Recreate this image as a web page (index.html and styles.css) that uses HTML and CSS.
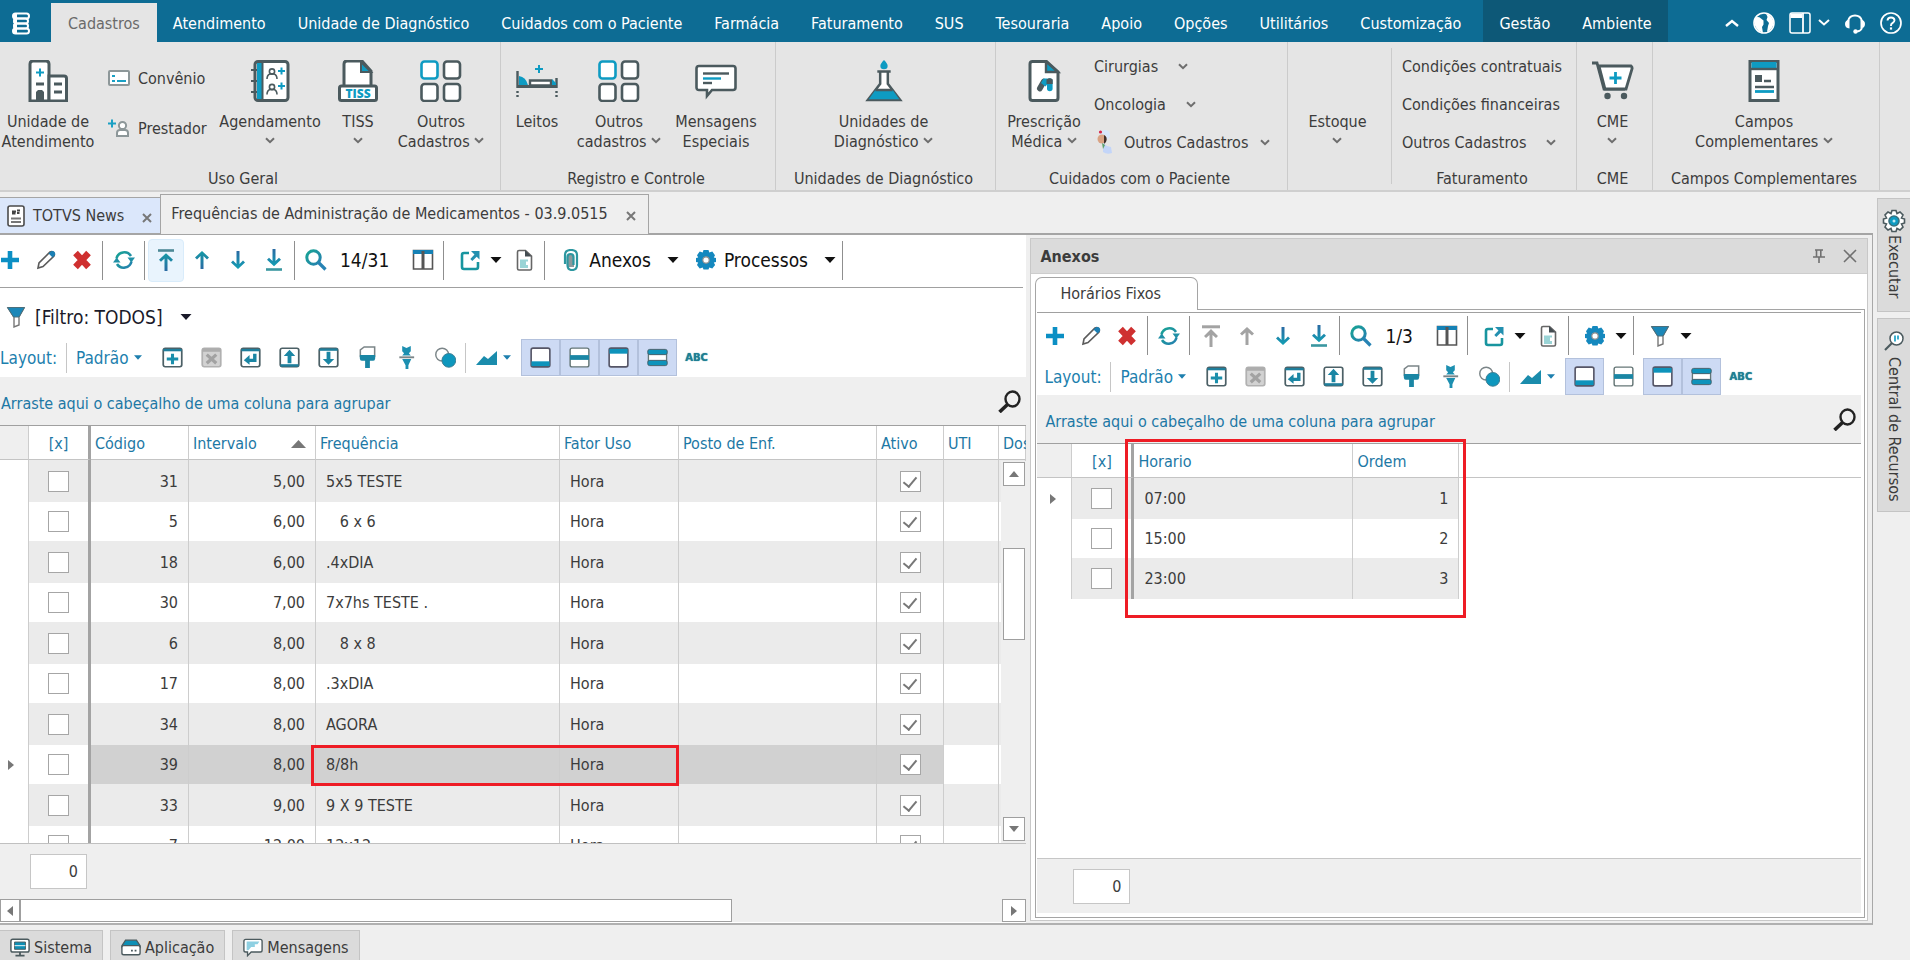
FILE: index.html
```html
<!DOCTYPE html>
<html lang="pt-BR">
<head>
  <meta charset="UTF-8">
  <meta name="viewport" content="width=device-width, initial-scale=1.0">
  <title>Frequências de Administração de Medicamentos</title>
  <link rel="stylesheet" href="styles.css">
</head>
<body>

  <!-- icon set -->
  <svg class="defs" width="0" height="0" aria-hidden="true">
    <defs>
      <linearGradient id="gUp" x1="0" y1="0" x2="0" y2="1"><stop offset="0" stop-color="#159aa6"/><stop offset="1" stop-color="#2a6aa3"/></linearGradient>
      <linearGradient id="gDown" x1="0" y1="0" x2="0" y2="1"><stop offset="0" stop-color="#2a6aa3"/><stop offset="1" stop-color="#12a0b4"/></linearGradient>
      <linearGradient id="gRound" x1="0" y1="0" x2="1" y2="1"><stop offset="0" stop-color="#18a394"/><stop offset="1" stop-color="#2580b0"/></linearGradient>
    </defs>
    <symbol id="i-chev" viewBox="0 0 10 7"><path d="M1 1.200l4 4 4-4" fill="none" stroke="#6e6e6e" stroke-width="2"/></symbol>
    <symbol id="i-caret" viewBox="0 0 11 6"><path d="M0 0h11l-5.500 6z" fill="currentColor"/></symbol>

    <symbol id="i-building" viewBox="0 0 42 42"><path d="M3 41V4q0-3 3-3h13q3 0 3 3v37z" fill="#fff" stroke="#4b5a5e" stroke-width="3"/><path d="M22 16h15q2.500 0 2.500 2.500V41H22z" fill="#fff" stroke="#4b5a5e" stroke-width="3"/><path d="M9 12.500h8M13 8.500v8" stroke="#0e9bc2" stroke-width="2"/><path d="M9 24h8M27 24h8M27 32h8" stroke="#4b5a5e" stroke-width="3"/><path d="M9 42V32l2-2h4l2 2v10z" fill="#4b5a5e"/></symbol>
    <symbol id="i-card" viewBox="0 0 22 16"><rect x="1" y="1" width="20" height="14" rx="1" fill="#fff" stroke="#8d9799" stroke-width="2"/><path d="M4 6h3M4 11h3M9 11h9" stroke="#1aa0c4" stroke-width="2"/></symbol>
    <symbol id="i-person" viewBox="0 0 22 18"><path d="M0 4.500h8M4 .5v8" stroke="#1aa0c4" stroke-width="2"/><circle cx="14.500" cy="6.500" r="3.600" fill="#fff" stroke="#8d9799" stroke-width="2"/><path d="M9 17v-3q0-3 3-3h5q3 0 3 3v3z" fill="#fff" stroke="#8d9799" stroke-width="2"/></symbol>
    <symbol id="i-book" viewBox="0 0 42 42"><rect x="6" y="1.500" width="33" height="39" rx="3" fill="#fff" stroke="#4b5a5e" stroke-width="3"/><path d="M8 3h5v36H8z" fill="#0e9bc2"/><path d="M13.500 2v38" stroke="#4b5a5e" stroke-width="2"/><path d="M2 10h6M2 21h6M2 32h6" stroke="#4b5a5e" stroke-width="2"/><g fill="none" stroke="#4b5a5e" stroke-width="1.600"><circle cx="23" cy="11.500" r="2.600"/><path d="M18 19q0-4 3-5h4q3 1 3 5"/><circle cx="23" cy="27" r="2.600"/><path d="M18 34.500q0-4 3-5h4q3 1 3 5"/></g><path d="M29 11h7M32.500 7.500v7M29 26h7M32.500 22.500v7" stroke="#0e9bc2" stroke-width="2"/></symbol>
    <symbol id="i-tiss" viewBox="0 0 42 42"><path d="M7 27V4q0-3 3-3h15l9 10v16z" fill="#fff" stroke="#4b5a5e" stroke-width="3"/><path d="M24 2v10h10z" fill="#0e9bc2" stroke="#4b5a5e" stroke-width="2"/><rect x="2.500" y="26" width="37" height="14.500" rx="2" fill="#fff" stroke="#4b5a5e" stroke-width="3"/><text x="21" y="37.500" text-anchor="middle" font-family="Open Sans, sans-serif" font-weight="800" font-size="12" fill="#0e9bc2">TISS</text></symbol>
    <symbol id="i-grid" viewBox="0 0 42 42"><g fill="#fff" stroke="#4b5a5e" stroke-width="2.600"><rect x="24" y="1.500" width="16" height="17" rx="3"/><rect x="1.500" y="24" width="16" height="17" rx="3"/><rect x="24" y="24" width="16" height="17" rx="3"/><rect x="1.500" y="1.500" width="16" height="17" rx="3" stroke="#0e9bc2"/></g></symbol>
    <symbol id="i-bed" viewBox="0 0 42 42"><path d="M19 9h8M23 5v8" stroke="#0e9bc2" stroke-width="2"/><path d="M1.500 11v17M1.500 31v2M1.500 35v2M40.500 18v10M40.500 31v2M40.500 35v2" stroke="#4b5a5e" stroke-width="2.400"/><path d="M3 16q7 1 9 9H3z" fill="#0e9bc2"/><path d="M14 25.500v-5h21v5z" fill="#fff" stroke="#4b5a5e" stroke-width="2.400"/><path d="M36 19l4 4v3h-4z" fill="#0e9bc2"/><path d="M1 26.500h40" stroke="#4b5a5e" stroke-width="3"/></symbol>
    <symbol id="i-msg" viewBox="0 0 42 42"><path d="M4 6h34q2.500 0 2.500 2.500v19q0 2.500-2.500 2.500H17l-5 6v-6H4q-2.500 0-2.500-2.500v-19Q1.500 6 4 6z" fill="#fff" stroke="#4b5a5e" stroke-width="2.600"/><path d="M8 13.500h26" stroke="#4b5a5e" stroke-width="2.400"/><path d="M8 18.500h18" stroke="#0e9bc2" stroke-width="2.400"/><path d="M8 23h9" stroke="#4b5a5e" stroke-width="2.400"/></symbol>
    <symbol id="i-flask" viewBox="0 0 42 44"><path d="M21 0q4 4 3.800 6.200a3.800 3.400 0 0 1-7.600 0Q17 4 21 0z" fill="#0e9bc2"/><path d="M17 12v13L4 42h34L25 25V12" fill="#fff" stroke="#4b5a5e" stroke-width="2.600"/><path d="M12 31.500h18l7 9.500H5z" fill="#0e9bc2"/><path d="M14 12h14M12 31.500h18" stroke="#4b5a5e" stroke-width="2.600"/></symbol>
    <symbol id="i-rx" viewBox="0 0 42 42"><path d="M7 4q0-2.500 2.500-2.500h14L35 12v26q0 2.500-2.500 2.500h-23Q7 40.500 7 38z" fill="#fff" stroke="#4b5a5e" stroke-width="3"/><path d="M23 1.500V12h12z" fill="#0e9bc2" stroke="#4b5a5e" stroke-width="2.400"/><path d="M16.800 28.500l4-7" stroke="#4b5a5e" stroke-width="5.600" stroke-linecap="round"/><path d="M18 23l2.500-4.500h4l.5 5-2.500 3z" fill="#0e9bc2"/><path d="M26.800 21v7.500" stroke="#0e9bc2" stroke-width="5.600" stroke-linecap="round"/><path d="M23.500 19.500q3-2.500 6.200 0V24h-6.200z" fill="#4b5a5e"/></symbol>
    <symbol id="i-nurse" viewBox="0 0 18 24"><circle cx="9" cy="5" r="5" fill="#d9e6fb"/><circle cx="6" cy="9" r="4.500" fill="#d9a384"/><path d="M8 5q4 2 2 7l-2 2z" fill="#40302c"/><circle cx="4.500" cy="2" r="1.600" fill="#d8274b"/><path d="M7 13l4 3 4 1 1 6q-5 2-9-1z" fill="#c3d5f8"/><path d="M6 13l1 6 2-4z" fill="#5ba06a"/></symbol>
    <symbol id="i-cart" viewBox="0 0 42 42"><path d="M0 3h5l7 26h21" fill="none" stroke="#4b5a5e" stroke-width="2.800"/><path d="M7 6h32q1.500 1 1 3l-6 20H13z" fill="#fff" stroke="#4b5a5e" stroke-width="2.800"/><path d="M17.500 18h12M23.500 12v12" stroke="#0e9bc2" stroke-width="2.800"/><circle cx="15.500" cy="36" r="3.200" fill="#4b5a5e"/><circle cx="32" cy="36" r="3.200" fill="#4b5a5e"/></symbol>
    <symbol id="i-form" viewBox="0 0 42 42"><path d="M7 1.500h28v39H7z" fill="#fff" stroke="#4b5a5e" stroke-width="3"/><path d="M8.500 2h25v6h-25z" fill="#0e9bc2"/><path d="M7 9h28" stroke="#4b5a5e" stroke-width="2.400"/><path d="M12 15h7v7h-7z" fill="#4b5a5e"/><path d="M21 21h7M12 27h19" stroke="#4b5a5e" stroke-width="2.400"/><path d="M12 31.500h19" stroke="#0e9bc2" stroke-width="2.800"/></symbol>

    <symbol id="i-plus" viewBox="0 0 22 22"><path d="M2 11h18M11 2v18" stroke="#0b8fc4" stroke-width="4.600"/></symbol>
    <symbol id="i-pencil" viewBox="0 0 22 22"><path d="M3 19l1-5L15 3q2-1 3.500.3T19 7L8 17.500z" fill="#fff" stroke="#5b5b5b" stroke-width="1.600"/><path d="M13.500 4.500L16 2.200q2-.7 3.300.6t.7 3.200L17.600 8.400z" fill="#1b7fb4"/></symbol>
    <symbol id="i-del" viewBox="0 0 22 22"><path d="M4.500 4l13 14M17.500 4l-13 14" stroke="#cf3030" stroke-width="6.400"/></symbol>
    <symbol id="i-refresh" viewBox="0 0 22 22"><path d="M3.500 9.500A8 8 0 0 1 18 7M18.500 12.500A8 8 0 0 1 4 15" fill="none" stroke="url(#gRound)" stroke-width="2.600"/><path d="M14.500 8.500h7.500l-3.700 5zM7.500 13.500H0l3.700-5z" fill="#2090a6"/></symbol>
    <symbol id="i-top" viewBox="0 0 22 22"><path d="M3 1.500h16" stroke="#4d8996" stroke-width="2.600"/><path d="M9.500 22V9.500L6 12.700 4 10.700l7-6.500 7 6.500-2 2-3.500-3.200V22z" fill="url(#gUp)"/></symbol>
    <symbol id="i-top-off" viewBox="0 0 22 22"><path d="M2 1.800h18" stroke="#a3a3a3" stroke-width="3"/><path d="M9.500 22V10L6 13l-2-2 7-7 7 7-2 2-3.500-3v12z" fill="#a3a3a3"/></symbol>
    <symbol id="i-up" viewBox="0 0 22 22"><path d="M9.500 20V7L6 10.500l-2-2L11 2l7 6.500-2 2L12.500 7v13z" fill="url(#gUp)"/></symbol>
    <symbol id="i-up-off" viewBox="0 0 22 22"><path d="M9.500 20V7.500L6 10.500l-2-2L11 2l7 6.500-2 2-3.500-3V20z" fill="#a3a3a3"/></symbol>
    <symbol id="i-down" viewBox="0 0 22 22"><path d="M9.500 2v13L6 11.500l-2 2 7 6.500 7-6.500-2-2-3.500 3.500V2z" fill="url(#gDown)"/></symbol>
    <symbol id="i-bottom" viewBox="0 0 22 22"><path d="M3 20.500h16" stroke="#3a97a0" stroke-width="2.600"/><path d="M9.500 0v12L6 8.800l-2 2 7 6.500 7-6.500-2-2-3.500 3.200V0z" fill="url(#gDown)"/></symbol>
    <symbol id="i-search" viewBox="0 0 22 22"><circle cx="8.500" cy="8.500" r="6.700" fill="none" stroke="url(#gRound)" stroke-width="3"/><path d="M13.500 13.500l7 7" stroke="#2783b4" stroke-width="3.200"/></symbol>
    <symbol id="i-cols" viewBox="0 0 22 22"><path d="M1.500 1.500h19v18.500h-19z" fill="#fff" stroke="#555" stroke-width="1.600"/><path d="M1 1h20v4H1z" fill="#1581b5"/><path d="M11 2v18" stroke="#555" stroke-width="3"/></symbol>
    <symbol id="i-export" viewBox="0 0 22 22"><path d="M10 4H5Q3 4 3 6v12q0 2 2 2h12q2 0 2-2v-5" fill="none" stroke="#18959f" stroke-width="2.600"/><path d="M12 2h8.500v8.500l-2.800-2.800-4.400 4.300-2-2L15.500 5.500z" fill="#2390b0"/></symbol>
    <symbol id="i-doc" viewBox="0 0 22 22"><path d="M4.500 3q0-1.500 1.500-1.500h6.500L18.500 7v12.500q0 1.500-1.500 1.500H6q-1.500 0-1.500-1.500z" fill="#fff" stroke="#666" stroke-width="1.600"/><path d="M12 1v6.500h6.500z" fill="#444d52"/><path d="M7 10.500h8v2h-2v3.500h2v3H7z" fill="#9ad4d6"/></symbol>
    <symbol id="i-clip" viewBox="0 0 22 22"><path d="M8 6h6v12H8z" fill="#8b999c"/><path d="M5 15V6q0-5 6-5t6 5v10q0 5-5 5-4.500 0-4.500-5V8q0-3 3-3t3 3v8" fill="none" stroke="#2c97a0" stroke-width="2.200"/></symbol>
    <symbol id="i-gear" viewBox="0 0 22 22"><path d="M8.500 1h5l.8 2.600 3-1 2.700 3.600-1.200 2.300 2.200.5v4l-2.200.6 1.300 2.300-2.800 3.600-3-1-.8 2h-5l-.8-2-3 1L2 15.900l1.200-2.300L1 13V9l2.200-.5L2 6.200l2.700-3.600 3 1z" fill="#1488be"/><circle cx="11" cy="11" r="3.200" fill="#fff" stroke="#8d8d8d" stroke-width="1.200"/></symbol>
    <symbol id="i-funnel" viewBox="0 0 22 22"><path d="M3 2h16l-5 9v8l-5 2V11z" fill="#fff" stroke="#777" stroke-width="1.400"/><path d="M2.500 1.500h17L14 11H8.500z" fill="#1b87b8" stroke="#4b6f7c" stroke-width="1"/></symbol>

    <symbol id="l-add" viewBox="0 0 22 22"><rect x="1.300" y="1.300" width="19.400" height="19.400" rx="2" fill="#fff" stroke="#4c6066" stroke-width="1.800"/><path d="M1.500 2h19v2.500h-19z" fill="#1f7f9c"/><path d="M5 12.500h12M11 7v11" stroke="#1a8fac" stroke-width="3.200"/></symbol>
    <symbol id="l-rem" viewBox="0 0 22 22"><rect x="1.300" y="1.300" width="19.400" height="19.400" rx="2" fill="#d2d2d2" stroke="#b1b1b1" stroke-width="1.800"/><path d="M1.500 1.500h19V5h-19z" fill="#adadad"/><path d="M6 8l10 9M16 8L6 17" stroke="#a2a2a2" stroke-width="3.400"/></symbol>
    <symbol id="l-back" viewBox="0 0 22 22"><rect x="1.300" y="1.300" width="19.400" height="19.400" rx="2" fill="#fff" stroke="#4c6066" stroke-width="1.800"/><path d="M1.500 2h19v2.500h-19z" fill="#1f7f9c"/><path d="M15.500 7v7H8" fill="none" stroke="#1a86a4" stroke-width="3.600"/><path d="M10 8.500v10L4 13.800z" fill="#1a86a4"/></symbol>
    <symbol id="l-up" viewBox="0 0 22 22"><rect x="1.300" y="1.300" width="19.400" height="19.400" rx="2" fill="#fff" stroke="#4c6066" stroke-width="1.800"/><path d="M1.500 18h19v2.600h-19z" fill="#1f7f9c"/><path d="M11 3l6 6.500h-4V17H9V9.500H5z" fill="#1a86a4"/></symbol>
    <symbol id="l-down" viewBox="0 0 22 22"><rect x="1.300" y="1.300" width="19.400" height="19.400" rx="2" fill="#fff" stroke="#4c6066" stroke-width="1.800"/><path d="M1.500 1.500h19V4h-19z" fill="#1f7f9c"/><path d="M11 18.500l-6-6h4V5h4v7.500h4z" fill="#1a86a4"/></symbol>
    <symbol id="l-brush" viewBox="0 0 22 24"><path d="M3.500 11V4l4-3h11v10z" fill="#fff" stroke="#7b8588" stroke-width="1.600"/><path d="M3 9.500h16V13q0 2.500-2 2.500H5q-2 0-2-2.500z" fill="#1a86a4"/><path d="M8.500 14h5v9h-5z" fill="#1a86a4"/></symbol>
    <symbol id="l-pen" viewBox="0 0 22 24"><path d="M6.500 0l4.500 2 4.500-2v5.500l-2 2 2 2.500h-9l2-2.500-2-2z" fill="#1c8fb0"/><path d="M3.500 11.800h15.500" stroke="#7b8588" stroke-width="2"/><path d="M6.500 13.500h9.500L13 20v4h-3v-4z" fill="#1c8fb0"/></symbol>
    <symbol id="l-circles" viewBox="0 0 22 22"><circle cx="7.500" cy="8" r="6.700" fill="#fff" stroke="#7b8588" stroke-width="1.500"/><circle cx="14.500" cy="14" r="7.200" fill="#0e97bd" stroke="#3d7d92" stroke-width="1"/></symbol>
    <symbol id="l-chart" viewBox="0 0 22 16"><path d="M0 15L8 6l4 3 9-8v14z" fill="#1a8cac"/></symbol>
    <symbol id="l-foot" viewBox="0 0 22 22"><rect x="1.200" y="1.200" width="19.600" height="19.600" rx="2" fill="#fff" stroke="#556" stroke-width="1.700"/><path d="M1.500 15h19v5h-19z" fill="#0e93bb"/></symbol>
    <symbol id="l-mid" viewBox="0 0 22 22"><rect x="1.200" y="1.200" width="19.600" height="19.600" rx="2" fill="#fff" stroke="#677" stroke-width="1.500"/><path d="M1 8.500h20v5H1z" fill="#1a86a4"/></symbol>
    <symbol id="l-head" viewBox="0 0 22 22"><rect x="1.200" y="1.200" width="19.600" height="19.600" rx="2" fill="#fff" stroke="#556" stroke-width="1.700"/><path d="M1.500 2h19v5h-19z" fill="#0e93bb"/></symbol>
    <symbol id="l-rows" viewBox="0 0 22 22"><rect x="1.500" y="7" width="19" height="8" fill="#fff" stroke="#677" stroke-width="1.400"/><rect x=".8" y="2.500" width="20.400" height="5.500" rx="2" fill="#0e93bb" stroke="#46606a" stroke-width="1"/><rect x=".8" y="14" width="20.400" height="5.500" rx="2" fill="#0e93bb" stroke="#46606a" stroke-width="1"/></symbol>
    <symbol id="i-find" viewBox="0 0 23 23"><ellipse cx="14.500" cy="9" rx="7" ry="7.500" fill="none" stroke="#222" stroke-width="2.400"/><path d="M9.500 14.500L1.500 22" stroke="#222" stroke-width="3.600"/></symbol>
  </svg>

  <header class="menubar">
    <a class="logo" href="#" aria-label="Início">
      <svg width="20" height="23" viewBox="0 0 20 23"><g fill="none" stroke="#fff" stroke-width="2"><rect x="2" y="1.500" width="16" height="5" rx="2.500"/><rect x="3" y="6.500" width="14" height="5" rx="2.500"/><rect x="3" y="11.500" width="14" height="5" rx="2.500"/><rect x="2" y="16.500" width="16" height="5" rx="2.500"/></g><path d="M2 2h4v4H2zM2.500 7H6v4H2.500zM2.500 12H6v4H2.500zM2 17h4v4H2z" fill="#fff"/></svg>
    </a>
    <nav class="menu">
      <a class="active" href="#">Cadastros</a>
      <a href="#">Atendimento</a>
      <a href="#">Unidade de Diagnóstico</a>
      <a href="#">Cuidados com o Paciente</a>
      <a href="#">Farmácia</a>
      <a href="#">Faturamento</a>
      <a href="#">SUS</a>
      <a href="#">Tesouraria</a>
      <a href="#">Apoio</a>
      <a href="#">Opções</a>
      <a href="#">Utilitários</a>
      <a href="#">Customização</a>
      <div class="dark">
        <a href="#">Gestão</a>
        <a href="#">Ambiente</a>
      </div>
    </nav>
    <div class="menu-tools">
      <button aria-label="Recolher"><svg width="14" height="8" viewBox="0 0 14 8"><path d="M1 7l6-5 6 5" fill="none" stroke="#fff" stroke-width="2.400"/></svg></button>
      <button aria-label="Idioma"><svg width="22" height="22" viewBox="0 0 22 22"><circle cx="11" cy="11" r="10" fill="none" stroke="#fff" stroke-width="1.600"/><path d="M2 6Q5 4 8 6.500l2.500 2v4L9 15l1 6Q2 18 1.500 11zM13 1.500q7 2.500 7.500 9.500-.5 6-6.500 9l1-6 1-3-2.500-3 1-3z" fill="#fff"/></svg></button>
      <button aria-label="Painéis"><svg width="22" height="22" viewBox="0 0 22 22"><rect x="1" y="1" width="20" height="20" rx="2" fill="none" stroke="#fff" stroke-width="1.500"/><path d="M1.500 1.500H13V6H1.500z" fill="#fff"/><path d="M14 1v20" stroke="#fff" stroke-width="1.800"/></svg><svg width="12" height="7" viewBox="0 0 12 7"><path d="M1 1l5 4.500L11 1" fill="none" stroke="#fff" stroke-width="2"/></svg></button>
      <button aria-label="Suporte"><svg width="22" height="22" viewBox="0 0 22 22"><path d="M4 9a7.200 7.200 0 0 1 14 0" fill="none" stroke="#fff" stroke-width="1.800"/><path d="M5.500 7.500v9Q1 16 1 12t4.500-4.500zM16.500 7.500v9q4.500-.5 4.500-4.500t-4.500-4.500z" fill="#fff"/><path d="M18 16q-1 3-5 3.500" fill="none" stroke="#fff" stroke-width="1.800"/><circle cx="11.500" cy="19.500" r="2.200" fill="#fff"/></svg></button>
      <button aria-label="Ajuda"><svg width="22" height="22" viewBox="0 0 22 22"><circle cx="11" cy="11" r="10" fill="none" stroke="#fff" stroke-width="1.700"/><path d="M7.500 8.500Q7.700 5.500 11 5.500t3.500 2.800q0 1.500-1.800 2.600T11 13.300v.7" fill="none" stroke="#fff" stroke-width="1.900"/><path d="M11 15.400v2.200" stroke="#fff" stroke-width="2.200"/></svg></button>
    </div>
  </header>

  <section class="ribbon">
    <div class="group geral">
      <div class="group-body">
        <button class="big w96"><svg class="ico42"><use href="#i-building"/></svg><span>Unidade de<br>Atendimento</span></button>
        <div class="stack two">
          <button class="small"><svg width="22" height="16"><use href="#i-card"/></svg>Convênio</button>
          <button class="small"><svg width="22" height="18"><use href="#i-person"/></svg>Prestador</button>
        </div>
        <button class="big w112"><svg class="ico42"><use href="#i-book"/></svg><span>Agendamento<br><svg class="chev"><use href="#i-chev"/></svg></span></button>
        <button class="big w64"><svg class="ico42"><use href="#i-tiss"/></svg><span>TISS<br><svg class="chev"><use href="#i-chev"/></svg></span></button>
        <button class="big w102"><svg class="ico42"><use href="#i-grid"/></svg><span>Outros<br>Cadastros <svg class="chev"><use href="#i-chev"/></svg></span></button>
      </div>
      <div class="group-name">Uso Geral</div>
    </div>
    <div class="group">
      <div class="group-body pad8">
        <button class="big w56"><svg class="ico42"><use href="#i-bed"/></svg><span>Leitos</span></button>
        <button class="big w108"><svg class="ico42"><use href="#i-grid"/></svg><span>Outros<br>cadastros <svg class="chev"><use href="#i-chev"/></svg></span></button>
        <button class="big w86"><svg class="ico42"><use href="#i-msg"/></svg><span>Mensagens<br>Especiais</span></button>
      </div>
      <div class="group-name">Registro e Controle</div>
    </div>
    <div class="group">
      <div class="group-body center">
        <button class="big"><svg class="ico42"><use href="#i-flask"/></svg><span>Unidades de<br>Diagnóstico <svg class="chev"><use href="#i-chev"/></svg></span></button>
      </div>
      <div class="group-name">Unidades de Diagnóstico</div>
    </div>
    <div class="group">
      <div class="group-body">
        <button class="big w96"><svg class="ico42"><use href="#i-rx"/></svg><span>Prescrição<br>Médica <svg class="chev"><use href="#i-chev"/></svg></span></button>
        <div class="stack">
          <button class="small">Cirurgias<svg class="chev far"><use href="#i-chev"/></svg></button>
          <button class="small">Oncologia<svg class="chev far"><use href="#i-chev"/></svg></button>
          <button class="small"><svg width="22" height="24"><use href="#i-nurse"/></svg>Outros Cadastros<svg class="chev near"><use href="#i-chev"/></svg></button>
        </div>
      </div>
      <div class="group-name">Cuidados com o Paciente</div>
    </div>
    <div class="group short">
      <div class="group-body center">
        <button class="big"><svg class="ico42"></svg><span>Estoque<br><svg class="chev"><use href="#i-chev"/></svg></span></button>
      </div>
    </div>
    <div class="group">
      <div class="group-body pad8">
        <div class="stack">
          <button class="small">Condições contratuais</button>
          <button class="small">Condições financeiras</button>
          <button class="small">Outros Cadastros<svg class="chev far"><use href="#i-chev"/></svg></button>
        </div>
      </div>
      <div class="group-name">Faturamento</div>
    </div>
    <div class="group">
      <div class="group-body center">
        <button class="big"><svg class="ico42"><use href="#i-cart"/></svg><span>CME<br><svg class="chev"><use href="#i-chev"/></svg></span></button>
      </div>
      <div class="group-name">CME</div>
    </div>
    <div class="group">
      <div class="group-body center">
        <button class="big"><svg class="ico42"><use href="#i-form"/></svg><span>Campos<br>Complementares <svg class="chev"><use href="#i-chev"/></svg></span></button>
      </div>
      <div class="group-name">Campos Complementares</div>
    </div>
  </section>

  <div class="workspace">
    <div class="document">
      <div class="doc-tabs">
        <div class="doc-tab news">
          <svg width="18" height="22" viewBox="0 0 18 22"><rect x="1" y="1" width="16" height="20" rx="2" fill="#fff" stroke="#4b4b4b" stroke-width="1.600"/><path d="M5 6.500h4M10 5.500h3M5 8.500h3.500M10 8h2.500" stroke="#444" stroke-width="2"/><path d="M4 13.500h10M4 17h10" stroke="#777" stroke-width="2"/></svg>
          <a href="#">TOTVS News</a>
          <button class="tab-close" aria-label="Fechar"><svg width="10" height="10" viewBox="0 0 10 10"><path d="M1 1l8 8M9 1L1 9" stroke="#777" stroke-width="2"/></svg></button>
        </div>
        <div class="doc-tab current">
          <a href="#">Frequências de Administração de Medicamentos - 03.9.0515</a>
          <button class="tab-close" aria-label="Fechar"><svg width="10" height="10" viewBox="0 0 10 10"><path d="M1 1l8 8M9 1L1 9" stroke="#777" stroke-width="2"/></svg></button>
        </div>
      </div>

      <div class="panes">
        <!-- frequências -->
        <section class="pane">
          <div class="toolbar main">
            <button class="tool" aria-label="Incluir"><svg><use href="#i-plus"/></svg></button>
            <button class="tool" aria-label="Editar"><svg><use href="#i-pencil"/></svg></button>
            <button class="tool" aria-label="Excluir"><svg><use href="#i-del"/></svg></button>
            <i class="sep"></i>
            <button class="tool" aria-label="Atualizar"><svg><use href="#i-refresh"/></svg></button>
            <i class="sep"></i>
            <button class="tool hover" aria-label="Primeiro"><svg><use href="#i-top"/></svg></button>
            <button class="tool" aria-label="Anterior"><svg><use href="#i-up"/></svg></button>
            <button class="tool" aria-label="Próximo"><svg><use href="#i-down"/></svg></button>
            <button class="tool" aria-label="Último"><svg><use href="#i-bottom"/></svg></button>
            <i class="sep"></i>
            <button class="tool" aria-label="Pesquisar"><svg><use href="#i-search"/></svg></button>
            <span class="counter">14/31</span>
            <button class="tool" aria-label="Colunas"><svg><use href="#i-cols"/></svg></button>
            <i class="sep"></i>
            <button class="drop" aria-label="Exportar"><svg><use href="#i-export"/></svg><svg class="caret gap"><use href="#i-caret"/></svg></button>
            <button class="tool" aria-label="Relatório"><svg><use href="#i-doc"/></svg></button>
            <i class="sep"></i>
            <button class="drop"><svg><use href="#i-clip"/></svg><span>Anexos</span><svg class="caret"><use href="#i-caret"/></svg></button>
            <button class="drop"><svg><use href="#i-gear"/></svg><span>Processos</span><svg class="caret"><use href="#i-caret"/></svg></button>
            <i class="sep"></i>
          </div>
          <div class="filter">
            <button class="filter-btn"><svg width="22" height="22"><use href="#i-funnel"/></svg><span>[Filtro: TODOS]</span><svg class="caret"><use href="#i-caret"/></svg></button>
          </div>
          <div class="layoutbar">
            <span class="layout-label">Layout:</span>
            <button class="layout-name">Padrão<svg class="caret"><use href="#i-caret"/></svg></button>
            <button class="lt" aria-label="Novo layout"><svg><use href="#l-add"/></svg></button>
            <button class="lt" aria-label="Excluir layout"><svg><use href="#l-rem"/></svg></button>
            <button class="lt" aria-label="Restaurar"><svg><use href="#l-back"/></svg></button>
            <button class="lt" aria-label="Exportar layout"><svg><use href="#l-up"/></svg></button>
            <button class="lt" aria-label="Importar layout"><svg><use href="#l-down"/></svg></button>
            <button class="lt" aria-label="Formatar"><svg><use href="#l-brush"/></svg></button>
            <button class="lt" aria-label="Ajustar"><svg><use href="#l-pen"/></svg></button>
            <button class="lt" aria-label="Condições"><svg><use href="#l-circles"/></svg></button>
            <button class="lt-chart" aria-label="Gráfico"><svg width="22" height="16"><use href="#l-chart"/></svg><svg class="caret"><use href="#i-caret"/></svg></button>
            <button class="lt on" aria-label="Rodapé"><svg><use href="#l-foot"/></svg></button>
            <button class="lt on" aria-label="Rodapé de grupo"><svg><use href="#l-mid"/></svg></button>
            <button class="lt on" aria-label="Agrupamento"><svg><use href="#l-head"/></svg></button>
            <button class="lt on" aria-label="Linhas"><svg><use href="#l-rows"/></svg></button>
            <button class="lt abc">ABC</button>
          </div>
          <div class="groupbar"><span>Arraste aqui o cabeçalho de uma coluna para agrupar</span><button aria-label="Localizar"><svg width="23" height="23"><use href="#i-find"/></svg></button></div>
          <div class="grid">
            <table class="freq">
              <colgroup><col class="c-ind"><col class="c-sel"><col class="c-cod"><col class="c-int"><col class="c-frq"><col class="c-fat"><col class="c-pos"><col class="c-ati"><col class="c-uti"><col></colgroup>
              <thead>
                <tr><th></th><th>[x]</th><th>Código</th><th><span class="sorted">Intervalo<svg width="15" height="8"><path d="M0 8L7.500 0 15 8z" fill="#777"/></svg></span></th><th>Frequência</th><th>Fator Uso</th><th>Posto de Enf.</th><th>Ativo</th><th>UTI</th><th>Dos</th></tr>
              </thead>
              <tbody id="freqRows"></tbody>
            </table>
            <div class="vscroll">
              <button aria-label="Rolar para cima"><svg width="10" height="6"><path d="M0 6L5 0l5 6z" fill="#777"/></svg></button>
              <div class="vtrack"><div class="vthumb"></div></div>
              <button aria-label="Rolar para baixo"><svg width="10" height="6"><path d="M0 0h10L5 6z" fill="#777"/></svg></button>
            </div>
          </div>
          <div class="totals"><input type="text" value="0" aria-label="Total de marcados" readonly></div>
          <div class="hscroll">
            <button aria-label="Rolar para a esquerda"><svg width="6" height="10"><path d="M6 0v10L0 5z" fill="#777"/></svg></button>
            <div class="htrack"><div class="hthumb"></div></div>
            <button aria-label="Rolar para a direita"><svg width="6" height="10"><path d="M0 0v10l6-5z" fill="#777"/></svg></button>
          </div>
        </section>

        <!-- anexos -->
        <section class="attach">
          <header class="attach-head">
            <h2>Anexos</h2>
            <button aria-label="Fixar"><svg width="12" height="14" viewBox="0 0 12 14"><path d="M2 1h8M3.500 1v6.500M7.800 1v6.500M0 8h12M6 8v6" fill="none" stroke="#707070" stroke-width="1.600"/></svg></button>
            <button aria-label="Fechar"><svg width="14" height="14" viewBox="0 0 14 14"><path d="M1 1l12 12M13 1L1 13" stroke="#707070" stroke-width="1.600"/></svg></button>
          </header>
          <div class="sub-tabs"><a href="#">Horários Fixos</a></div>
          <div class="attach-body">
            <div class="toolbar">
              <button class="tool" aria-label="Incluir"><svg><use href="#i-plus"/></svg></button>
              <button class="tool" aria-label="Editar"><svg><use href="#i-pencil"/></svg></button>
              <button class="tool" aria-label="Excluir"><svg><use href="#i-del"/></svg></button>
              <i class="sep"></i>
              <button class="tool" aria-label="Atualizar"><svg><use href="#i-refresh"/></svg></button>
              <i class="sep"></i>
              <button class="tool" aria-label="Primeiro"><svg><use href="#i-top-off"/></svg></button>
              <button class="tool" aria-label="Anterior"><svg><use href="#i-up-off"/></svg></button>
              <button class="tool" aria-label="Próximo"><svg><use href="#i-down"/></svg></button>
              <button class="tool" aria-label="Último"><svg><use href="#i-bottom"/></svg></button>
              <i class="sep"></i>
              <button class="tool" aria-label="Pesquisar"><svg><use href="#i-search"/></svg></button>
              <span class="counter">1/3</span>
              <button class="tool" aria-label="Colunas"><svg><use href="#i-cols"/></svg></button>
              <i class="sep"></i>
              <button class="drop" aria-label="Exportar"><svg><use href="#i-export"/></svg><svg class="caret gap"><use href="#i-caret"/></svg></button>
              <button class="tool" aria-label="Relatório"><svg><use href="#i-doc"/></svg></button>
              <i class="sep"></i>
              <button class="drop" aria-label="Processos"><svg><use href="#i-gear"/></svg><svg class="caret gap"><use href="#i-caret"/></svg></button>
              <i class="sep"></i>
              <button class="drop" aria-label="Filtro"><svg><use href="#i-funnel"/></svg><svg class="caret gap"><use href="#i-caret"/></svg></button>
            </div>
            <div class="layoutbar inset">
              <span class="layout-label">Layout:</span>
              <button class="layout-name">Padrão<svg class="caret"><use href="#i-caret"/></svg></button>
              <button class="lt" aria-label="Novo layout"><svg><use href="#l-add"/></svg></button>
              <button class="lt" aria-label="Excluir layout"><svg><use href="#l-rem"/></svg></button>
              <button class="lt" aria-label="Restaurar"><svg><use href="#l-back"/></svg></button>
              <button class="lt" aria-label="Exportar layout"><svg><use href="#l-up"/></svg></button>
              <button class="lt" aria-label="Importar layout"><svg><use href="#l-down"/></svg></button>
              <button class="lt" aria-label="Formatar"><svg><use href="#l-brush"/></svg></button>
              <button class="lt" aria-label="Ajustar"><svg><use href="#l-pen"/></svg></button>
              <button class="lt" aria-label="Condições"><svg><use href="#l-circles"/></svg></button>
              <button class="lt-chart" aria-label="Gráfico"><svg width="22" height="16"><use href="#l-chart"/></svg><svg class="caret"><use href="#i-caret"/></svg></button>
              <button class="lt on" aria-label="Rodapé"><svg><use href="#l-foot"/></svg></button>
              <button class="lt" aria-label="Rodapé de grupo"><svg><use href="#l-mid"/></svg></button>
              <button class="lt on" aria-label="Agrupamento"><svg><use href="#l-head"/></svg></button>
              <button class="lt on" aria-label="Linhas"><svg><use href="#l-rows"/></svg></button>
              <button class="lt abc">ABC</button>
            </div>
            <div class="groupbar inset"><span>Arraste aqui o cabeçalho de uma coluna para agrupar</span><button aria-label="Localizar"><svg width="23" height="23"><use href="#i-find"/></svg></button></div>
            <div class="grid">
              <table class="hours">
                <colgroup><col class="h-ind"><col class="h-sel"><col class="h-hor"><col class="h-ord"><col></colgroup>
                <thead>
                  <tr><th></th><th>[x]</th><th>Horario</th><th>Ordem</th><th></th></tr>
                </thead>
                <tbody id="hourRows"></tbody>
              </table>
              <div class="mark mark-hours"></div>
            </div>
            <div class="totals inset"><input type="text" value="0" aria-label="Total de marcados" readonly></div>
          </div>
        </section>
      </div>
    </div>

    <aside class="side-tabs">
      <button class="side-run"><svg width="24" height="24" viewBox="0 0 24 24"><path d="M10 1.500h4l1 3 3-1.500 3 3-1.500 3 3 1v4l-3 1 1.500 3-3 3-3-1.500-1 3h-4l-1-3-3 1.500-3-3 1.500-3-3-1v-4l3-1L3 6l3-3 3 1.500z" fill="#fff" stroke="#4b5a5e" stroke-width="1.600"/><circle cx="12" cy="12" r="5" fill="#0e9bc2" stroke="#37717f" stroke-width="1.600"/><circle cx="12" cy="12" r="1.500" fill="#bfe8f3"/></svg>Executar</button>
      <button class="side-res"><svg width="20" height="20" viewBox="0 0 20 20"><circle cx="12.500" cy="7.500" r="6.500" fill="#fff" stroke="#4b5a5e" stroke-width="1.500"/><path d="M11 4.500v6M14 4.500v4" stroke="#0e9bc2" stroke-width="1.600"/><path d="M8 12l-7 7" stroke="#4b5a5e" stroke-width="2.200"/></svg>Central de Recursos</button>
    </aside>
  </div>

  <footer class="bottom-tabs">
    <button><svg width="20" height="19" viewBox="0 0 22 20"><rect x="1" y="1" width="20" height="14" rx="2" fill="#fff" stroke="#4b5a5e" stroke-width="1.600"/><path d="M5 4h12v8H5z" fill="#0e8fb5" stroke="#4b5a5e"/><path d="M5 8h12" stroke="#fff"/><path d="M11 15v4M6 19h10" stroke="#4b5a5e" stroke-width="2"/></svg>Sistema</button>
    <button><svg width="20" height="17" viewBox="0 0 22 18"><path d="M5 1h12l4 6v2H1V7z" fill="#0e8fb5" stroke="#4b5a5e" stroke-width="1.400"/><rect x="1" y="7" width="20" height="10" rx="2" fill="#fff" stroke="#4b5a5e" stroke-width="1.500"/><path d="M11 12.500h2M15 12.500h2" stroke="#4b5a5e" stroke-width="2"/></svg>Aplicação</button>
    <button><svg width="20" height="19" viewBox="0 0 22 20"><path d="M3 1h16q2 0 2 2v10q0 2-2 2H9l-4 4v-4H3q-2 0-2-2V3q0-2 2-2z" fill="#fff" stroke="#4b5a5e" stroke-width="1.500"/><path d="M4 3.500h14l-2 3h-3v3H9L6 13H4z" fill="#8fd0e2"/></svg>Mensagens</button>
  </footer>

  <script>
    const freqs = [
      ['31', '5,00', '5x5 TESTE'],
      ['5', '6,00', '\u00a0\u00a0 6 x 6'],
      ['18', '6,00', '.4xDIA'],
      ['30', '7,00', '7x7hs TESTE .'],
      ['6', '8,00', '\u00a0\u00a0 8 x 8'],
      ['17', '8,00', '.3xDIA'],
      ['34', '8,00', 'AGORA'],
      ['39', '8,00', '8/8h'],
      ['33', '9,00', '9 X 9 TESTE'],
      ['7', '12,00', '12x12']
    ];
    const hours = [['07:00', 1], ['15:00', 2], ['23:00', 3]];
    const arrow = '<svg width="6" height="10"><path d="M0 0v10l6-5z" fill="#777"/></svg>';

    document.getElementById('freqRows').innerHTML = freqs.map(([code, interval, name]) => {
      const selected = code === '39';
      return `
        <tr class="${selected ? 'selected' : ''}">
          <td>${selected ? arrow : ''}</td>
          <td><input type="checkbox" aria-label="Marcar ${code}"></td>
          <td>${code}</td>
          <td>${interval}</td>
          <td>${name}${selected ? '<span class="mark mark-freq"></span>' : ''}</td>
          <td>Hora</td>
          <td></td>
          <td><input type="checkbox" aria-label="Ativo ${code}" checked></td>
          <td></td>
          <td></td>
        </tr>`;
    }).join('');

    document.getElementById('hourRows').innerHTML = hours.map(([time, order]) => `
        <tr>
          <td>${order === 1 ? arrow : ''}</td>
          <td><input type="checkbox" aria-label="Marcar ${time}"></td>
          <td>${time}</td>
          <td>${order}</td>
          <td></td>
        </tr>`).join('');
  </script>
</body>
</html>
```
FILE: styles.css
```css
* {
  box-sizing: border-box;
}

body {
  margin: 0;
  height: 100vh;
  overflow: hidden;
  display: flex;
  flex-direction: column;
  background: #efefef;
  color: #3c3c3c;
  font-family: "DejaVu Sans Condensed", "DejaVu Sans", sans-serif;
  font-size: 16px;
}

button {
  font: inherit;
  color: inherit;
  background: none;
  border: 0;
  padding: 0;
  cursor: pointer;
  white-space: nowrap;
}

a {
  color: inherit;
  text-decoration: none;
}

svg {
  display: block;
  flex: none;
}

.defs {
  position: absolute;
}

/* top menu */
.menubar {
  display: flex;
  height: 42px;
  background: #0d6c94;
  color: #fff;
}

.logo {
  width: 51px;
  padding: 12px 0 0 11px;
}

.menu {
  display: flex;
  align-items: flex-end;
}

.menu a {
  height: 39px;
  line-height: 41px;
  padding: 0 16px;
  white-space: nowrap;
}

.menu .active {
  padding: 0 17px;
  background: #e5e5e5;
  color: #6a6a6a;
}

.dark {
  display: flex;
  align-items: flex-end;
  height: 42px;
  margin-left: 6px;
  background: #0d5877;
}

.menu-tools {
  margin-left: auto;
  padding: 3px 8px 0 0;
  display: flex;
  align-items: center;
  gap: 14px;
}

.menu-tools button {
  display: flex;
  align-items: center;
  gap: 7px;
}

/* ribbon */
.ribbon {
  display: grid;
  grid-template-columns: 501px 275px 220px 292px 104px 185px 76px 227px 1fr;
  height: 150px;
  background: #e5e5e5;
  border-bottom: 2px solid #cfcfcf;
}

.group {
  display: flex;
  flex-direction: column;
  border-right: 1px solid #cbcbcb;
}

.group.short {
  margin: 6px 0;
}

.group.short .group-body {
  margin-top: -6px;
}

.group-body {
  display: flex;
  height: 127px;
}

.group-body.center {
  justify-content: center;
  padding-right: 4px;
}

.pad8 {
  padding-left: 8px;
}

.group-name {
  padding-right: 4px;
  line-height: 20px;
  text-align: center;
}

.geral .group-name {
  padding-right: 14px;
}

.big {
  display: flex;
  flex-direction: column;
  align-items: center;
  padding-top: 18px;
  line-height: 20px;
}

.big .chev {
  display: inline-block;
  vertical-align: 3px;
}

.ico42 {
  width: 42px;
  height: 42px;
  margin-bottom: 10px;
}

.w56 { width: 56px; }
.w64 { width: 64px; }
.w86 { width: 86px; }
.w96 { width: 96px; }
.w102 { width: 102px; }
.w108 { width: 108px; }
.w112 { width: 112px; }

.chev {
  width: 10px;
  height: 7px;
}

.stack {
  padding: 5px 0 0 2px;
}

.stack.two {
  width: 118px;
  padding: 11px 0 0 12px;
}

.small {
  display: flex;
  align-items: center;
  gap: 8px;
  height: 38px;
}

.two .small {
  height: 50px;
}

.far {
  margin-left: 12px;
}

.near {
  margin-left: 4px;
}

/* workspace */
.workspace {
  flex: 1;
  min-height: 0;
  display: flex;
  gap: 4px;
}

.document {
  flex: 1;
  min-width: 0;
  display: flex;
  flex-direction: column;
}

.doc-tabs {
  display: flex;
  align-items: flex-end;
  height: 43px;
  border-bottom: 2px solid #a5a5a5;
}

.doc-tab {
  display: flex;
  align-items: center;
  border: 1px solid #a5a5a5;
  border-bottom: 0;
}

.news {
  height: 36px;
  padding: 0 8px 0 7px;
  gap: 8px;
  background: #dbe7fb;
  border-left: 0;
  border-right: 0;
}

.news .tab-close {
  margin: 4px 0 0 10px;
}

.current {
  height: 40px;
  padding: 0 12px 2px 10px;
  margin-bottom: -1px;
  background: #efefef;
}

.current .tab-close {
  margin: 4px 0 0 18px;
}

.panes {
  flex: 1;
  min-height: 0;
  display: grid;
  grid-template-columns: 1027fr 838fr;
  gap: 4px;
  padding-right: 4px;
  border-right: 1px solid #a8a8a8;
  border-bottom: 2px solid #b0b0b0;
}

.pane {
  display: flex;
  flex-direction: column;
  min-width: 0;
  min-height: 0;
  background: #fff;
}

/* toolbars */
.toolbar {
  display: flex;
  align-items: center;
  height: 48px;
  color: #111;
  font-size: 19px;
}

.toolbar.main {
  height: 53px;
  padding-bottom: 2px;
  margin-right: 3px;
  border-bottom: 1px solid #a0a0a0;
}

.main .tool:first-child {
  margin-left: -8px;
}

.tool {
  width: 36px;
  height: 43px;
  display: flex;
  align-items: center;
  justify-content: center;
}

.tool svg,
.drop svg {
  width: 22px;
  height: 22px;
}

.tool.hover {
  background: #e9f4fd;
  border: 1px solid #d9ecfb;
  border-radius: 4px;
}

.sep {
  width: 2px;
  height: 39px;
  margin: 0 2px;
  border-left: 1px solid #8f8f8f;
}

.counter {
  padding: 0 16px 0 6px;
}

.drop {
  display: flex;
  align-items: center;
  padding: 0 4px 0 12px;
}

.drop span {
  margin: 0 16px 0 7px;
}

svg.caret {
  width: 12px;
  height: 6px;
}

.caret.gap {
  margin-left: 9px;
}

.filter {
  height: 51px;
  padding: 6px 0 0 5px;
  color: #1a1a2a;
  font-size: 19px;
}

.filter-btn {
  display: flex;
  align-items: center;
  height: 46px;
  gap: 8px;
}

.filter-btn .caret {
  margin-left: 9px;
}

.layoutbar {
  display: flex;
  align-items: center;
  height: 37px;
  color: #1d7fae;
  font-size: 17px;
}

.pane .layoutbar {
  margin-bottom: 1px;
}

.inset {
  padding-left: 7px;
}

.layout-label {
  width: 67px;
  line-height: 30px;
  border-right: 1px solid #c6c6c6;
}

.layout-name {
  width: 86px;
  padding-left: 9px;
  display: flex;
  align-items: center;
  gap: 5px;
}

.layout-name .caret,
.lt-chart .caret {
  width: 8px;
  height: 5px;
}

.lt {
  width: 39px;
  height: 37px;
  display: flex;
  align-items: center;
  justify-content: center;
}

.lt svg {
  width: 21px;
  height: 23px;
}

.lt.on {
  background: #cddaf4;
  border: 1px solid #b3c1dc;
}

.lt-chart {
  width: 56px;
  height: 30px;
  display: flex;
  align-items: center;
  gap: 5px;
  padding-left: 10px;
  border-left: 1px solid #c6c6c6;
}

.abc {
  font-family: "DejaVu Sans", sans-serif;
  font-weight: 700;
  font-size: 10px;
  color: #1f7f93;
  text-shadow: 0 0 1px #1f7f93;
}

.groupbar {
  display: flex;
  align-items: center;
  justify-content: space-between;
  height: 48px;
  padding-right: 5px;
  background: #efefef;
  color: #1d78a5;
  white-space: nowrap;
}

.groupbar span {
  padding: 4px 0 0 1px;
}

/* grids */
.grid {
  position: relative;
  flex: 1;
  min-height: 0;
  border-top: 1px solid #a0a0a0;
}

.pane .grid {
  overflow: hidden;
  border-bottom: 1px solid #c0c0c0;
}

table {
  width: 100%;
  table-layout: fixed;
  border-collapse: separate;
  border-spacing: 0;
}

.c-ind { width: 29px; }
.c-sel { width: 62px; }
.c-cod { width: 98px; }
.c-int { width: 127px; }
.c-frq { width: 244px; }
.c-fat { width: 119px; }
.c-pos { width: 198px; }
.c-ati { width: 67px; }
.c-uti { width: 55px; }
.h-ind { width: 35px; }
.h-sel { width: 62px; }
.h-hor { width: 219px; }
.h-ord { width: 106px; }

th {
  height: 34px;
  padding: 2px 0 0 4px;
  text-align: left;
  font-weight: 400;
  color: #1d78a5;
  white-space: nowrap;
  border-right: 1px solid #cdcdcd;
  border-bottom: 1px solid #c4c4c4;
}

th:first-child {
  background: #efefef;
}

th:nth-child(2) {
  padding-left: 0;
  text-align: center;
}

th:nth-child(2),
td:nth-child(2) {
  border-right: 3px solid #a3a3a3;
}

.sorted {
  display: flex;
  justify-content: space-between;
  align-items: center;
  padding-right: 9px;
}

td {
  height: 39px;
  padding: 0 10px;
  white-space: pre;
  border-right: 1px solid #cdcdcd;
}

tr:nth-child(odd) td {
  height: 42px;
  background: #ebebeb;
}

tbody tr td:first-child {
  background: #fff;
  padding: 0 0 0 8px;
}

td:nth-child(2),
.freq td:nth-child(8) {
  padding: 0;
}

.freq td:nth-child(3),
.freq td:nth-child(4),
.hours td:nth-child(4) {
  text-align: right;
}

.hours tr:nth-child(odd) td {
  height: 41px;
}

.hours td:first-child {
  padding-left: 13px;
}

.hours th:last-child,
.hours tr td:last-child {
  border-right: 0;
  background: #fff;
}

.selected td:nth-child(n+3):nth-child(-n+8) {
  background: #d1d1d1;
}

.freq td:nth-child(5) {
  position: relative;
}

input[type="checkbox"] {
  appearance: none;
  display: block;
  width: 21px;
  height: 21px;
  margin: 0 auto;
  border: 1px solid #a6a6a6;
  background: #fff;
}

input[type="checkbox"]:checked::before {
  content: "";
  display: block;
  width: 6px;
  height: 11px;
  margin: 2px auto 0;
  border: solid #777;
  border-width: 0 2px 2px 0;
  transform: rotate(40deg);
}

/* red callouts */
.mark {
  position: absolute;
  z-index: 1;
  border: 3px solid #ee1c25;
  pointer-events: none;
}

.mark-freq {
  top: 0;
  left: -5px;
  width: 368px;
  height: 41px;
}

.mark-hours {
  top: -5px;
  left: 88px;
  width: 341px;
  height: 179px;
}

/* scrollbars */
.vscroll {
  position: absolute;
  top: 35px;
  right: 0;
  bottom: 0;
  width: 25px;
  padding: 1px 1px 2px 2px;
  display: flex;
  flex-direction: column;
  background: #efefef;
}

.vscroll button,
.hscroll button {
  display: flex;
  align-items: center;
  justify-content: center;
  background: #fff;
  border: 1px solid #9f9f9f;
}

.vscroll button {
  height: 24px;
}

.vtrack {
  flex: 1;
  padding-top: 62px;
}

.vthumb {
  height: 92px;
  background: #fff;
  border: 1px solid #9f9f9f;
}

.totals {
  height: 55px;
  padding: 10px 0 0 30px;
  background: #efefef;
}

.totals.inset {
  padding-left: 36px;
  border-top: 1px solid #c6c6c6;
}

.totals input {
  width: 57px;
  height: 35px;
  padding: 0 8px 0 0;
  font: inherit;
  color: inherit;
  text-align: right;
  background: #fff;
  border: 1px solid #c6c6c6;
}

.hscroll {
  display: flex;
  height: 23px;
  margin-bottom: 1px;
  background: #efefef;
}

.hscroll button {
  width: 20px;
}

.hscroll button:last-child {
  width: 24px;
}

.htrack {
  flex: 1;
}

.hthumb {
  width: 72.5%;
  height: 100%;
  background: #fff;
  border: 1px solid #9f9f9f;
}

/* attachments panel */
.attach {
  display: flex;
  flex-direction: column;
  min-width: 0;
  margin: 3px 0 2px;
  background: #fff;
  border: 1px solid #c8c8c8;
}

.attach-head {
  display: flex;
  align-items: center;
  gap: 18px;
  height: 35px;
  padding: 0 10px 0 9px;
  background: #dbdbdb;
  border-bottom: 1px solid #cdcdcd;
}

.attach-head h2 {
  flex: 1;
  margin: 0;
  font-size: 16px;
}

.sub-tabs {
  display: flex;
  height: 36px;
  padding: 3px 2px 0 4px;
}

.sub-tabs a {
  width: 163px;
  line-height: 32px;
  padding-left: 24px;
  border: 1px solid #a5a5a5;
  border-bottom: 0;
  border-radius: 7px 7px 0 0;
}

.sub-tabs::after {
  content: "";
  flex: 1;
  border-bottom: 1px solid #a5a5a5;
}

.attach-body {
  flex: 1;
  min-height: 0;
  display: flex;
  flex-direction: column;
  margin: 0 2px 2px 4px;
  padding: 2px 3px 4px 1px;
  border: solid #a5a5a5;
  border-width: 0 1px 1px;
}

.attach-body .toolbar {
  height: 46px;
  border-top: 1px solid #a0a0a0;
}

/* side and bottom tabs */
.side-tabs {
  width: 33px;
  padding-top: 6px;
  display: flex;
  flex-direction: column;
  gap: 6px;
}

.side-tabs button {
  display: flex;
  align-items: center;
  writing-mode: vertical-rl;
  background: #dbdbdb;
  border: 1px solid #c4c4c4;
  border-right: 0;
}

.side-run {
  height: 114px;
  padding-top: 10px;
  gap: 2px;
}

.side-res {
  height: 194px;
  padding-top: 12px;
  gap: 6px;
}

.bottom-tabs {
  display: flex;
  gap: 7px;
  height: 35px;
  padding-top: 5px;
}

.bottom-tabs button {
  display: flex;
  align-items: center;
  gap: 4px;
  padding: 4px 10px 0;
  background: #dbdbdb;
  border: 1px solid #c4c4c4;
  border-bottom: 0;
}

.bottom-tabs button:first-child {
  border-left: 0;
}
```
